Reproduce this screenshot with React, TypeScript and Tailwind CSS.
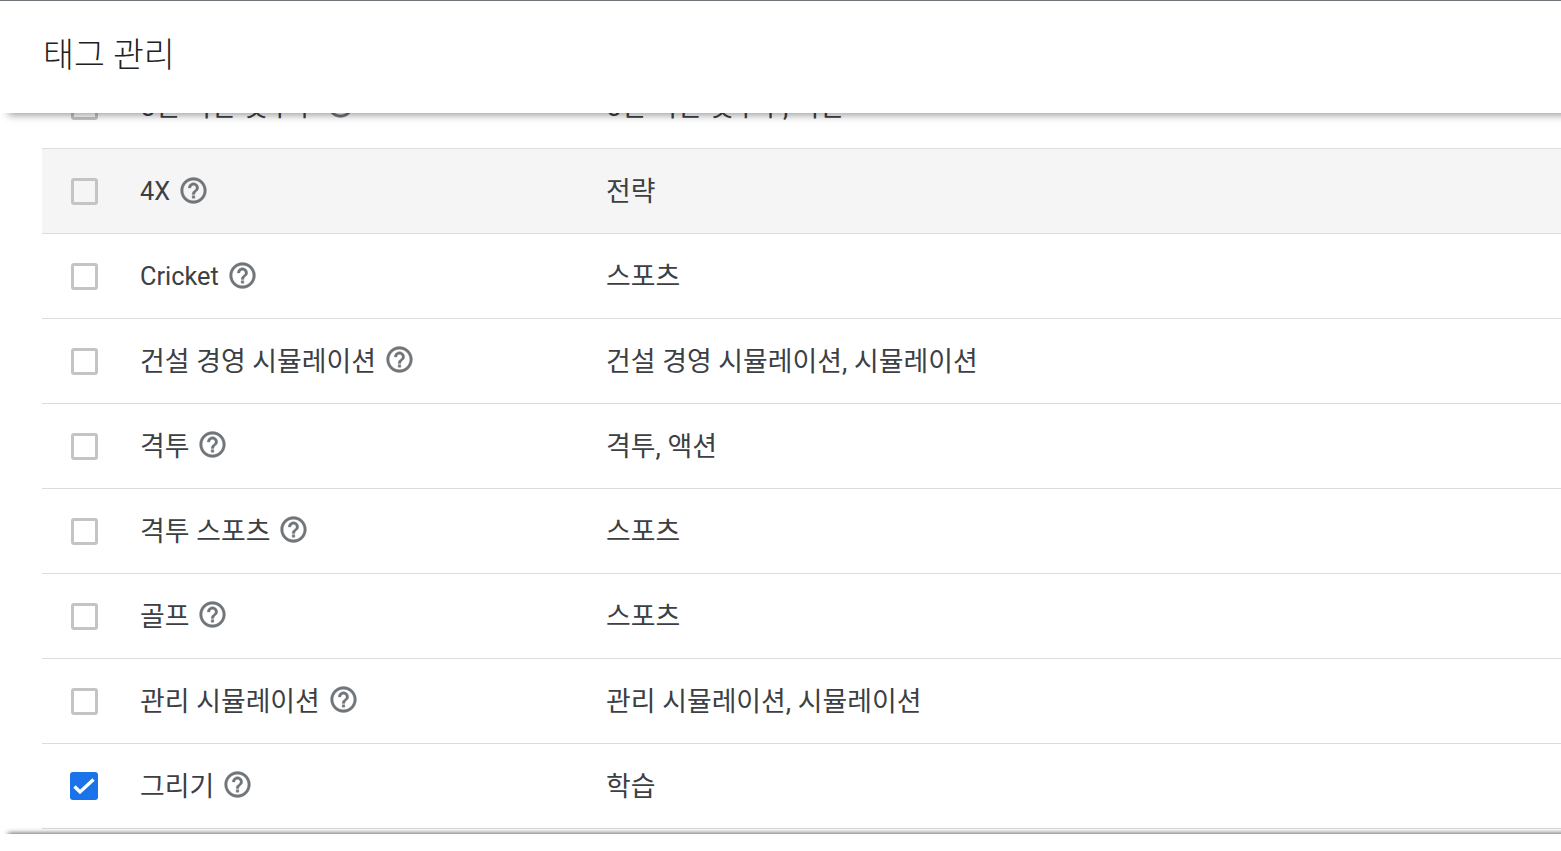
const rows = [
  { name: "4X", category: "전략", hovered: true, latin: true },
  { name: "Cricket", category: "스포츠", latin: true },
  { name: "건설 경영 시뮬레이션", category: "건설 경영 시뮬레이션, 시뮬레이션" },
  { name: "격투", category: "격투, 액션" },
  { name: "격투 스포츠", category: "스포츠" },
  { name: "골프", category: "스포츠" },
  { name: "관리 시뮬레이션", category: "관리 시뮬레이션, 시뮬레이션" },
  { name: "그리기", category: "학습", checked: true },
];

const HelpIcon = () => (
  <svg width="31" height="31" viewBox="0 0 24 24" fill="#70757a" stroke="#70757a" strokeWidth="0.3" className="mb-[2px] shrink-0">
    <path d="M11 18h2v-2h-2v2zm1-16C6.48 2 2 6.48 2 12s4.48 10 10 10 10-4.48 10-10S17.52 2 12 2zm0 18c-4.41 0-8-3.59-8-8s3.59-8 8-8 8 3.59 8 8-3.59 8-8 8zm0-14c-2.21 0-4 1.79-4 4h2c0-1.1.9-2 2-2s2 .9 2 2c0 2-3 1.75-3 5h2c0-2.25 3-2.5 3-5 0-2.21-1.79-4-4-4z" />
  </svg>
);

const Checkbox = ({ checked }: { checked?: boolean }) =>
  checked ? (
    <div className="flex h-7 w-7 items-center justify-center rounded-[3px] bg-[#1a73e8]">
      <svg width="28" height="28" viewBox="0 0 28 28" fill="none">
        <path d="M4.5 14.5 10 20 23.5 7.5" stroke="#fff" strokeWidth="3.4" />
      </svg>
    </div>
  ) : (
    <div className="ml-px h-[27px] w-[27px] rounded-[3px] border-[3px] border-[#c4c4c4]" />
  );

type RowProps = { name: string; category: string; checked?: boolean; hovered?: boolean; latin?: boolean };

const Row = ({ name, category, checked, hovered, latin }: RowProps) => (
  <div className={`flex h-[85px] shrink-0 items-center border-b border-[#dadce0] pl-[28px] text-[26.9px] text-[#3c4043] ${hovered ? "bg-[#f5f5f5]" : ""}`}>
    <div className="flex w-[70px] justify-start">
      <Checkbox checked={checked} />
    </div>
    <div className="flex w-[466px] items-center gap-[8px]">
      <span className={`pt-[2px] ${latin ? "text-[25.3px]" : ""}`}>{name}</span>
      <HelpIcon />
    </div>
    <div className="pt-[2px]">{category}</div>
  </div>
);

export default function App() {
  return (
    <div className="relative flex h-[851px] flex-col overflow-hidden bg-white font-['Roboto','Noto_Sans_CJK_KR',sans-serif]">
      <div className="relative z-10 h-[113px] shrink-0">
        <div className="absolute inset-y-0 left-2 -right-5 shadow-[0_2px_8px_rgba(0,0,0,0.4)]" />
        <header className="absolute inset-0 flex items-center border-t border-[#70757a] bg-white pb-px pl-[43px] text-[33.6px] font-light text-[#202124]">
          태그 관리
        </header>
      </div>
      <main className="h-[721px] shrink-0 overflow-hidden pl-[42px]">
        <div className="-mt-[49px]">
          <Row name="5인 이란 빛우주" category="5인 이란 빛우주, 이란" />
          {rows.map((r) => (
            <Row key={r.name} {...r} />
          ))}
        </div>
      </main>
      <div className="relative z-10 h-[17px] shrink-0">
        <div className="absolute inset-y-0 left-2 -right-5 shadow-[0_-1px_5px_rgba(0,0,0,0.6)]" />
        <div className="absolute inset-0 bg-white" />
      </div>
    </div>
  );
}
